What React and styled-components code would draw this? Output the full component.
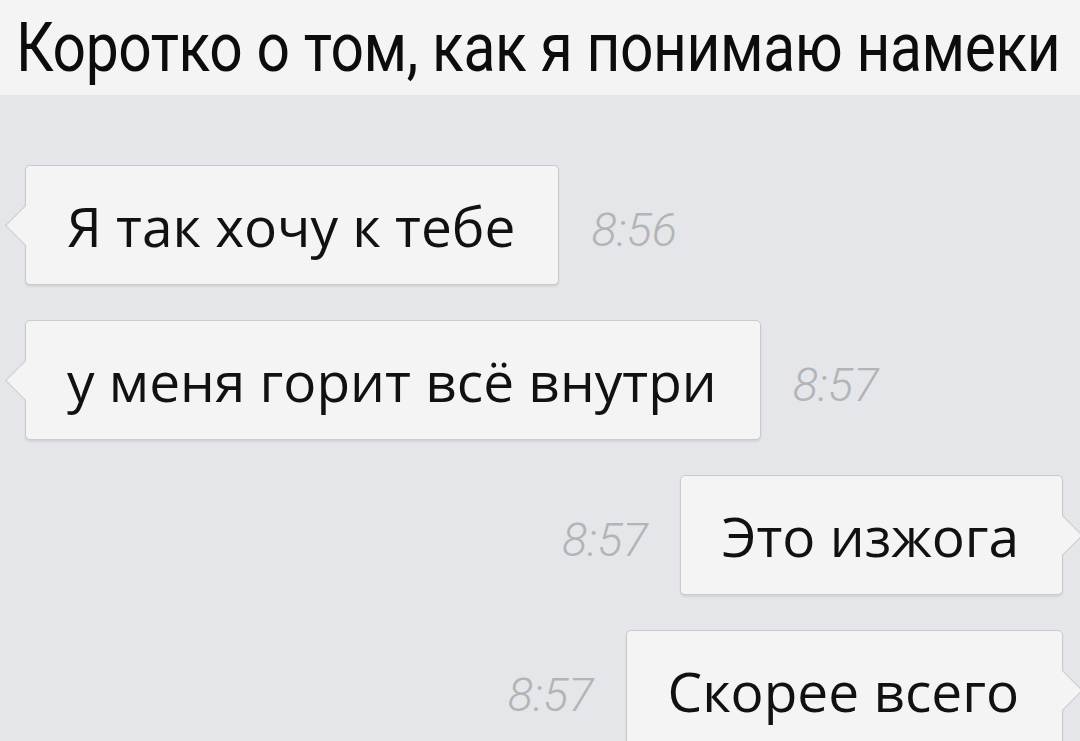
import styled, { createGlobalStyle } from "styled-components";

const messages = [
  { id: 1, text: "Я так хочу к тебе", time: "8:56", out: false },
  { id: 2, text: "у меня горит всё внутри", time: "8:57", out: false },
  { id: 3, text: "Это изжога", time: "8:57", out: true },
  { id: 4, text: "Скорее всего", time: "8:57", out: true },
];

function App() {
  return (
    <>
      <GlobalStyle />
      <Screen>
        <Header>
          <Title>Коротко о том, как я понимаю намеки</Title>
        </Header>
        <Chat>
          {messages.map((m) => (
            <Row key={m.id} $out={m.out}>
              <Bubble $out={m.out}>{m.text}</Bubble>
              <Time>{m.time}</Time>
            </Row>
          ))}
        </Chat>
      </Screen>
    </>
  );
}

const GlobalStyle = createGlobalStyle`
  html, body {
    margin: 0;
    padding: 0;
    background: #e5e6e9;
  }
`;

const Screen = styled.div`
  width: 1080px;
  height: 741px;
  overflow: hidden;
  display: flex;
  flex-direction: column;
  background: #e5e6e9;
`;

const Header = styled.header`
  height: 95px;
  flex-shrink: 0;
  padding-left: 16px;
  display: flex;
  align-items: center;
  background: #f4f4f4;
  overflow: hidden;
`;

// the screenshot uses a condensed face; squeeze Roboto to match
const Title = styled.h1`
  margin: 0;
  color: #0c0c0c;
  font-family: Roboto, "Liberation Sans", sans-serif;
  font-size: 69px;
  font-weight: 400;
  letter-spacing: -0.5px;
  white-space: nowrap;
  transform: scaleX(0.852);
  transform-origin: left center;
`;

const Chat = styled.div`
  display: flex;
  flex-direction: column;
  gap: 35px;
  padding: 70px 17px 0 25px;
`;

const Row = styled.div`
  display: flex;
  align-items: center;
  gap: 32px;
  flex-direction: ${(p) => (p.$out ? "row-reverse" : "row")};
`;

const Bubble = styled.div`
  position: relative;
  height: 120px;
  box-sizing: border-box;
  padding: 0 43px 0 41px;
  display: flex;
  align-items: center;
  background: #f4f4f5;
  border: 1.5px solid #c9cacc;
  border-radius: 5px;
  box-shadow: 0 2px 2px rgba(0, 0, 0, 0.08);
  color: #111;
  font-family: "Open Sans", "DejaVu Sans", sans-serif;
  font-size: 55px;
  white-space: nowrap;

  &::before {
    content: "";
    position: absolute;
    top: 50%;
    ${(p) => (p.$out ? "right: -15px;" : "left: -15px;")}
    width: 28px;
    height: 28px;
    margin-top: -14px;
    background: #f4f4f5;
    border: 1.5px solid #c9cacc;
    ${(p) =>
      p.$out
        ? "border-left: none; border-bottom: none;"
        : "border-right: none; border-top: none;"}
    transform: rotate(45deg);
  }
`;

const Time = styled.span`
  color: #b3b4b7;
  font-family: Roboto, "Liberation Sans", sans-serif;
  font-size: 47px;
  font-weight: 300;
  font-style: italic;
  margin-top: 8px;
`;

export default App;
